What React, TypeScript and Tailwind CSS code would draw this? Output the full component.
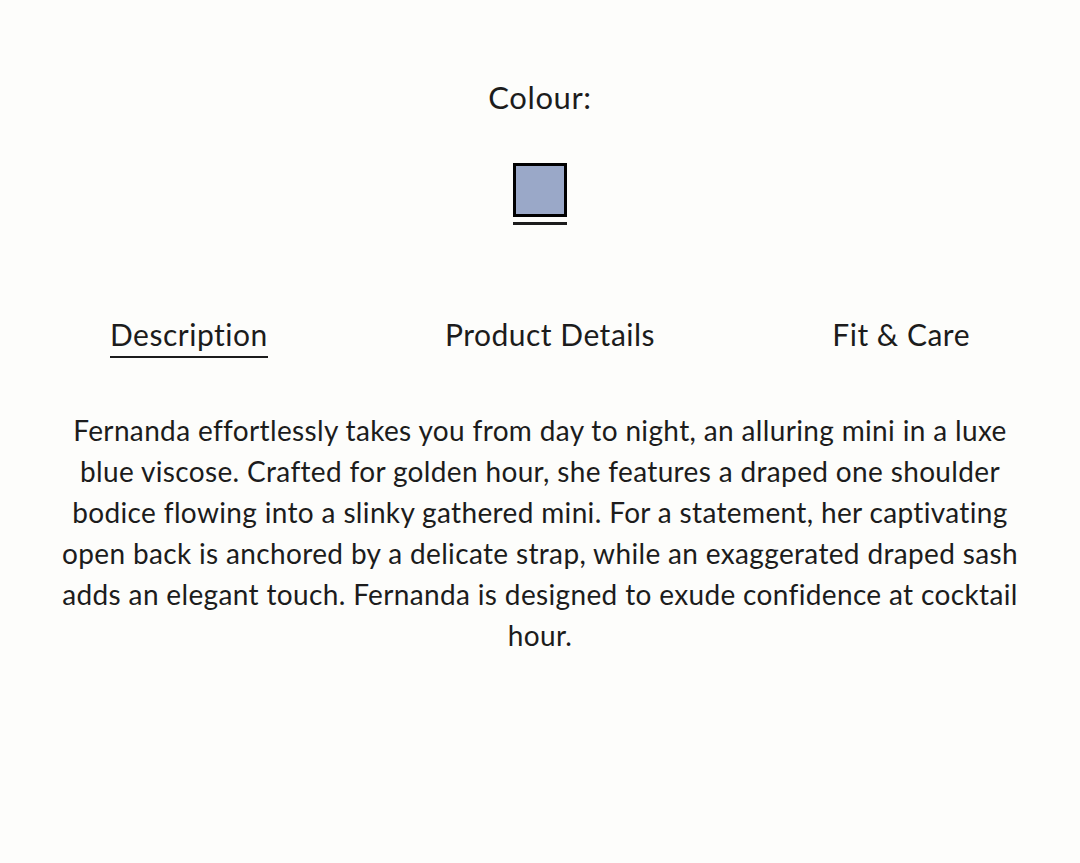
import React, { useState } from 'react';

const tabs = ['Description', 'Product Details', 'Fit & Care'];

const App: React.FC = () => {
  const [active, setActive] = useState('Description');

  return (
    <div
      className="min-h-screen bg-[#fdfdfb] text-[#1c1c1c] flex flex-col items-center pt-[78px]"
      style={{ fontFamily: 'Lato, "Noto Sans", sans-serif' }}
    >
      {/* Colour picker */}
      <p className="text-[31px] leading-[38px] tracking-[0.6px]">Colour:</p>

      <div className="mt-[47px] flex flex-col items-center">
        <button className="w-[54px] h-[54px] border-[3px] border-black bg-[#9aa8c8]" aria-label="Blue" />
        <span className="mt-[5px] w-[54px] h-[3px] bg-[#1c1c1c]" />
      </div>

      {/* Tabs */}
      <div className="w-full px-[110px] mt-[90px] flex justify-between">
        {tabs.map(tab => (
          <button
            key={tab}
            onClick={() => setActive(tab)}
            className={`text-[30px] leading-[38px] tracking-[0.5px] pb-[3px] border-b-2 ${
              active === tab ? 'border-[#1c1c1c]' : 'border-transparent'
            }`}
          >
            {tab}
          </button>
        ))}
      </div>

      {/* Description */}
      <p className="mt-[52px] max-w-[975px] text-center text-[28px] leading-[41px] tracking-[0.35px]">
        Fernanda effortlessly takes you from day to night, an alluring mini in a luxe blue viscose. Crafted for golden
        hour, she features a draped one shoulder bodice flowing into a slinky gathered mini. For a statement, her
        captivating open back is anchored by a delicate strap, while an exaggerated draped sash adds an elegant touch.
        Fernanda is designed to exude confidence at cocktail hour.
      </p>
    </div>
  );
};

export default App;
